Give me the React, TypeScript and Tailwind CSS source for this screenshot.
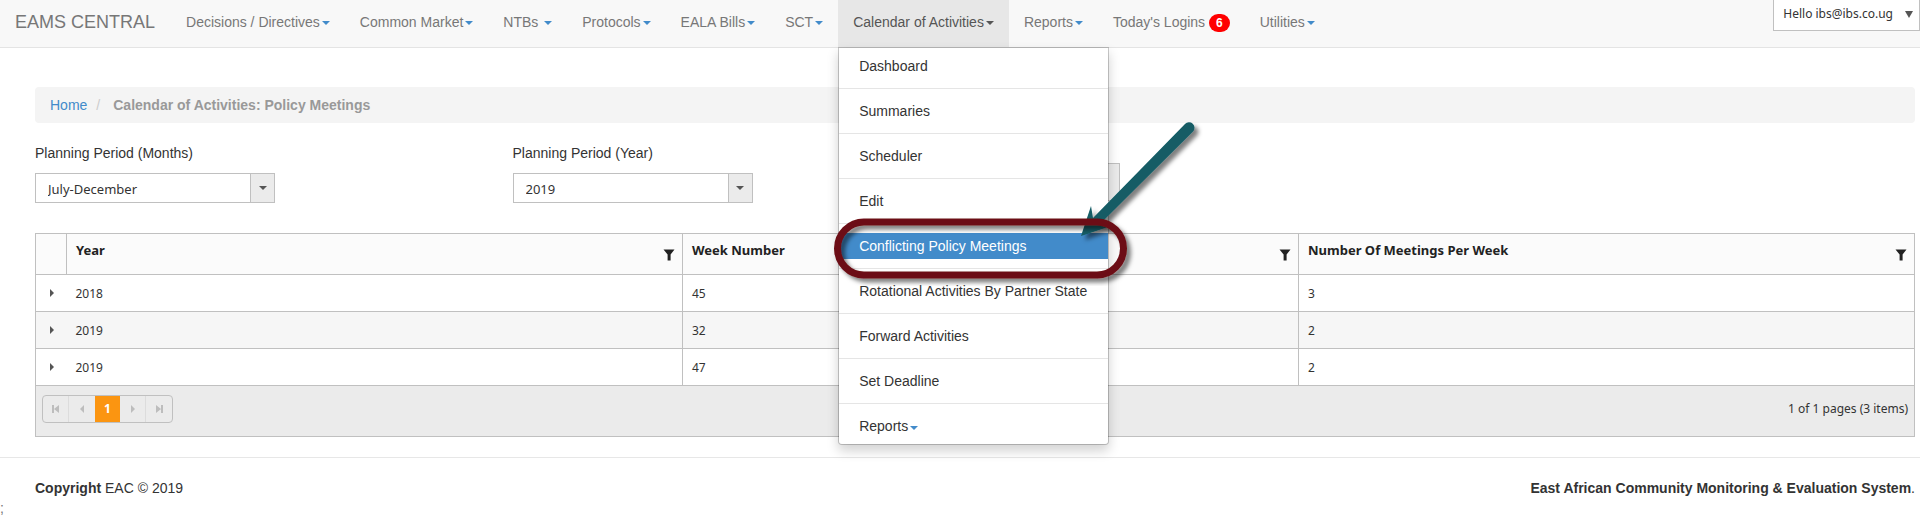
import { type ReactNode } from "react";

const navItems: { label: string; spaced?: boolean }[] = [
  { label: "Decisions / Directives" },
  { label: "Common Market" },
  { label: "NTBs", spaced: true },
  { label: "Protocols" },
  { label: "EALA Bills" },
  { label: "SCT" },
];

const menuItems = [
  "Dashboard",
  "Summaries",
  "Scheduler",
  "Edit",
  "Conflicting Policy Meetings",
  "Rotational Activities By Partner State",
  "Forward Activities",
  "Set Deadline",
  "Reports",
];

const rows = [
  { year: "2018", week: "45", meetings: "3" },
  { year: "2019", week: "32", meetings: "2" },
  { year: "2019", week: "47", meetings: "2" },
];

function Caret({ className = "text-[#428bca]" }: { className?: string }) {
  return (
    <svg viewBox="0 0 8 4" className={`ml-0.5 inline-block h-1 w-2 align-middle ${className}`} aria-hidden="true">
      <path d="M0 0h8L4 4z" fill="currentColor" />
    </svg>
  );
}

function Funnel() {
  return (
    <svg viewBox="0 0 12 12" className="h-3 w-3" aria-hidden="true">
      <path d="M0.5 0.5h11L7.6 5.5V11.5H4.6V5.5z" fill="#222" />
    </svg>
  );
}

function NavLink({ children }: { children: ReactNode }) {
  return (
    <a href="#" className="block px-[15px] pt-2 pb-[15px] whitespace-nowrap">
      {children}
    </a>
  );
}

function CalendarMenu() {
  return (
    <ul className="absolute top-full left-0 z-10 min-w-[271px] rounded-b border border-black/20 bg-white bg-clip-padding py-[5px] text-[#333] shadow-[0_6px_12px_rgba(0,0,0,0.175)]">
      {menuItems.map((item, i) => (
        <li key={item} className={i > 0 ? "mt-[9px] border-t border-[#e5e5e5] pt-[9px]" : ""}>
          <a
            href="#"
            className={
              item === "Conflicting Policy Meetings"
                ? "block bg-[#428bca] px-5 py-[3px] whitespace-nowrap text-white"
                : "block px-5 py-[3px] whitespace-nowrap"
            }
          >
            {item}
            {item === "Reports" && <Caret />}
          </a>
        </li>
      ))}
      <li aria-hidden="true" className="pointer-events-none absolute top-[58px] -left-1">
        <svg width="380" height="190" viewBox="836 106 380 190" fill="none" overflow="visible">
          <defs>
            <filter id="mark-shadow" x="-20%" y="-20%" width="140%" height="140%">
              <feDropShadow dx="4" dy="4" stdDeviation="2" floodColor="#000" floodOpacity="0.5" />
            </filter>
          </defs>
          <g filter="url(#mark-shadow)" fill="#125c65">
            <path d="M1186 124a5.300 5.300 0 0 1 8 7.500L1103 222l9 4-30 10 10-30 2 12z" />
          </g>
          <g filter="url(#mark-shadow)">
            <rect x="838.5" y="222" width="286" height="53" rx="26.500" stroke="#6c0f14" strokeWidth="7" />
          </g>
        </svg>
      </li>
    </ul>
  );
}

function Picker({ id, label, value }: { id: string; label: string; value: string }) {
  return (
    <div className="flex flex-col items-start">
      <label htmlFor={id} className="mb-2.5">
        {label}
      </label>
      <div className="grid w-60">
        <select
          id={id}
          className="col-start-1 row-start-1 h-[30px] w-full appearance-none border border-[#c0c0c0] bg-white px-3 pt-0.5 font-['Noto_Sans','Open_Sans',sans-serif] text-[13px] text-[#333]"
        >
          <option>{value}</option>
        </select>
        <span className="pointer-events-none col-start-1 row-start-1 flex w-[25px] items-center justify-center justify-self-end border border-[#c0c0c0] bg-[#ebebeb]">
          <svg viewBox="0 0 8 4" className="h-1 w-2" aria-hidden="true">
            <path d="M0 0h8L4 4z" fill="#555" />
          </svg>
        </span>
      </div>
    </div>
  );
}

function HeaderCell({ title }: { title: string }) {
  return (
    <th className="border border-[#c0c0c0] p-0 text-left align-top">
      <div className="flex h-10 items-start justify-between pt-2 pr-[7px] pl-[9px]">
        <span className="text-[13px]">{title}</span>
        <button type="button" aria-label={`Filter ${title}`} className="mt-[7px]">
          <Funnel />
        </button>
      </div>
    </th>
  );
}

const pagerIcons = {
  first: "M1 1h2v8H1zM8 1v8L3 5z",
  prev: "M7 1v8L3 5z",
  next: "M3 1v8l4-4z",
  last: "M7 1h2v8H7zM2 1v8l5-4z",
};

function PagerButton({ label, icon, className }: { label: string; icon: string; className: string }) {
  return (
    <button type="button" aria-label={label} className={`flex w-[26px] items-center justify-center ${className}`}>
      <svg viewBox="0 0 10 10" className="size-2.5" aria-hidden="true">
        <path d={icon} fill="#bdbdbd" />
      </svg>
    </button>
  );
}

export default function App() {
  return (
    <div className="bg-white font-['Liberation_Sans',Arial,sans-serif] text-sm text-[#333]">
      <header className="flex items-start border-b border-[#e4e4e4] bg-[#f8f8f8] text-[#777]">
        <a href="#" className="px-[15px] pt-3 text-lg/5 whitespace-nowrap">
          EAMS CENTRAL
        </a>
        <nav className="flex grow pt-1 pl-px">
          {navItems.map((item) => (
            <NavLink key={item.label}>
              {item.label}
              {item.spaced && " "}
              <Caret />
            </NavLink>
          ))}
          <div className="relative -mt-1 bg-[#e7e7e7] pt-1 text-[#555]">
            <NavLink>
              Calendar of Activities
              <Caret className="text-[#555]" />
            </NavLink>
            <CalendarMenu />
          </div>
          <NavLink>
            Reports
            <Caret />
          </NavLink>
          <NavLink>
            Today's Logins{" "}
            <span className="inline-block rounded-full bg-[#f00] px-[7px] py-[3px] align-middle text-xs/3 font-bold text-white">6</span>
          </NavLink>
          <NavLink>
            Utilities
            <Caret />
          </NavLink>
        </nav>
        <button
          type="button"
          className="flex h-[31px] items-center gap-3 border border-t-0 border-[#c0c0c0] bg-white pr-1.5 pb-0.5 pl-[9px] font-['Noto_Sans','Open_Sans',sans-serif] text-xs text-[#333]"
        >
          Hello ibs@ibs.co.ug
          <svg viewBox="0 0 8 7" className="h-[7px] w-2" aria-hidden="true">
            <path d="M0 0h8L4 7z" fill="#555" />
          </svg>
        </button>
      </header>

      <main className="pt-[39px] pr-[5px] pb-5 pl-[35px]">
        <ol className="flex rounded bg-[#f4f4f4] px-[15px] py-2">
          <li>
            <a href="#" className="text-[#428bca]">
              Home
            </a>
          </li>
          <li className="font-bold text-[#999]">
            <span className="pr-[13px] pl-[9px] font-normal text-[#ccc]">/</span>Calendar of Activities: Policy Meetings
          </li>
        </ol>

        <form className="mt-5 grid grid-cols-4 gap-[30px]">
          <Picker id="months" label="Planning Period (Months)" value="July-December" />
          <Picker id="year" label="Planning Period (Year)" value="2019" />
          <button type="button" aria-label="Search" className="mt-5 h-[38px] w-[130px] border border-[#c0c0c0] bg-[#ebebeb]" />
        </form>

        <div className="mt-[30px] font-['Noto_Sans','Open_Sans',sans-serif] text-xs">
          <table className="w-full table-fixed border-collapse">
            <colgroup>
              <col className="w-[31px]" />
              <col />
              <col />
              <col />
            </colgroup>
            <thead>
              <tr className="bg-[#fbfbfb] text-[#222]">
                <th className="border border-[#c0c0c0]" />
                <HeaderCell title="Year" />
                <HeaderCell title="Week Number" />
                <HeaderCell title="Number Of Meetings Per Week" />
              </tr>
            </thead>
            <tbody>
              {rows.map((row) => (
                <tr key={row.week} className="h-[37px] border border-[#c0c0c0] even:bg-[#f6f6f6]">
                  <td className="p-0">
                    <button type="button" aria-label="Expand row" className="flex w-full justify-center pl-0.5">
                      <svg viewBox="0 0 4 8" className="h-2 w-1" aria-hidden="true">
                        <path d="M0 0v8l4-4z" fill="#555" />
                      </svg>
                    </button>
                  </td>
                  <td className="border-r border-[#c0c0c0] px-[9px] pt-px pb-0">{row.year}</td>
                  <td className="border-r border-[#c0c0c0] px-[9px] pt-px pb-0">{row.week}</td>
                  <td className="px-[9px] pt-px pb-0">{row.meetings}</td>
                </tr>
              ))}
            </tbody>
          </table>
          <div className="flex h-[51px] items-start justify-between border border-t-0 border-[#c0c0c0] bg-[#ebebeb] px-1.5 pt-[9px]">
            <div className="flex h-7 rounded border border-[#c0c0c0]">
              <PagerButton label="First page" icon={pagerIcons.first} className="border-r border-[#dcdcdc]" />
              <PagerButton label="Previous page" icon={pagerIcons.prev} className="" />
              <button type="button" aria-current="page" className="w-[25px] bg-[#fb9511] font-bold text-white">
                1
              </button>
              <PagerButton label="Next page" icon={pagerIcons.next} className="border-r border-[#dcdcdc]" />
              <PagerButton label="Last page" icon={pagerIcons.last} className="" />
            </div>
            <span className="leading-7">1 of 1 pages (3 items)</span>
          </div>
        </div>
      </main>

      <footer className="border-t border-[#e7e7e7] pt-5">
        <div className="flex justify-between pr-[5px] pl-[35px]">
          <span>
            <b>Copyright</b> EAC © 2019
          </span>
          <span>
            <b>East African Community Monitoring &amp; Evaluation System</b>.
          </span>
        </div>
        <span className="block text-[#777]">;</span>
      </footer>
    </div>
  );
}
